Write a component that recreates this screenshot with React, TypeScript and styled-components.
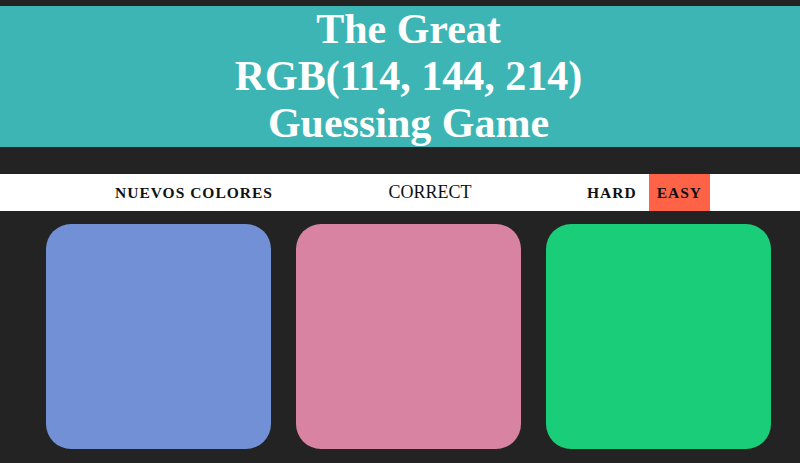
import React from "react";
import styled, { createGlobalStyle } from "styled-components";

const Global = createGlobalStyle`
  html, body { margin: 0; padding: 0; }
  body {
    background: #232323;
    font-family: "Liberation Serif", "Times New Roman", serif;
    overflow: hidden;
  }
`;

const Page = styled.div`
  display: flex;
  flex-direction: column;
  padding-top: 6px;
`;

const Header = styled.h1`
  margin: 0;
  background: #3cb5b4;
  color: #ffffff;
  text-align: center;
  font-family: "Liberation Serif", serif;
  font-weight: 700;
  font-size: 42px;
  line-height: 47px;
  padding-left: 17px;
`;

const Stripe = styled.nav`
  margin-top: 27px;
  background: #ffffff;
  height: 37px;
  display: flex;
  justify-content: center;
  padding-left: 17px;
`;

const StripeInner = styled.div`
  display: flex;
  align-items: stretch;
`;

const Button = styled.button<{ $active?: boolean; $gap?: number }>`
  border: none;
  margin: 0 0 0 ${(p) => p.$gap ?? 0}px;
  padding: 0 8px;
  height: 37px;
  background: ${(p) => (p.$active ? "#ff6347" : "#ffffff")};
  color: #111111;
  font-family: "Liberation Serif", serif;
  font-weight: 700;
  font-size: 15.5px;
  letter-spacing: 1px;
  text-transform: uppercase;
  cursor: pointer;
`;

const Message = styled.span`
  width: 298px;
  display: flex;
  align-items: center;
  justify-content: center;
  font-size: 18px;
  color: #111111;
  text-transform: uppercase;
`;

const Board = styled.div`
  display: flex;
  justify-content: center;
  gap: 25px;
  padding: 13px 0 0 17px;
`;

const Square = styled.div<{ $color: string }>`
  width: 225px;
  height: 225px;
  border-radius: 25px;
  background: ${(p) => p.$color};
  flex: none;
`;

const colors = ["rgb(114, 144, 214)", "rgb(217, 131, 163)", "rgb(26, 205, 121)"];

export default function App() {
  return (
    <Page>
      <Global />
      <Header>
        The Great
        <br />
        RGB(114, 144, 214)
        <br />
        Guessing Game
      </Header>
      <Stripe>
        <StripeInner>
          <Button>Nuevos Colores</Button>
          <Message>Correct</Message>
          <Button>Hard</Button>
          <Button $active $gap={4}>Easy</Button>
        </StripeInner>
      </Stripe>
      <Board>
        {colors.map((c) => (
          <Square key={c} $color={c} />
        ))}
      </Board>
    </Page>
  );
}
